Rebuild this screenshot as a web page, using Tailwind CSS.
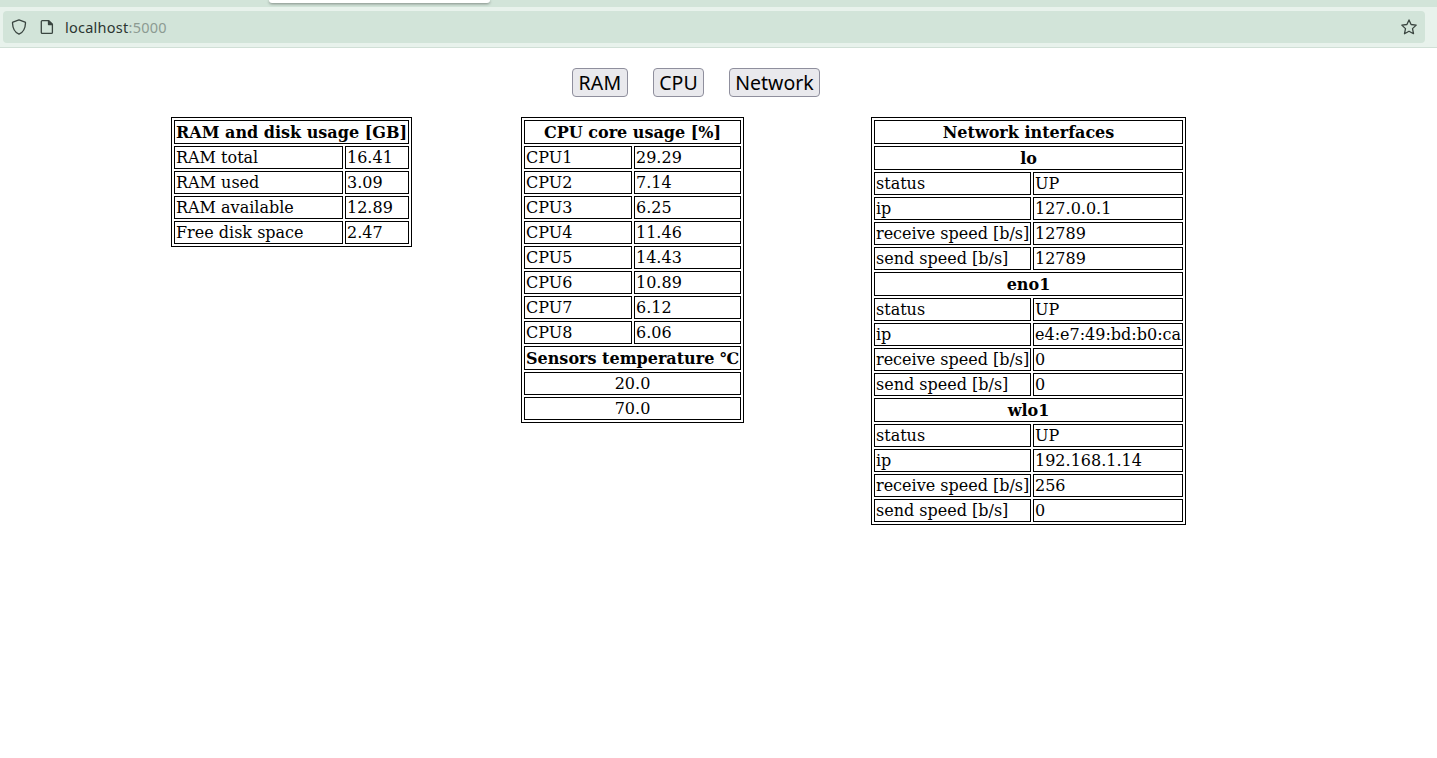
<!DOCTYPE html>
<html lang="en">
<head>
<meta charset="utf-8">
<title>localhost:5000</title>
<script src="https://cdn.jsdelivr.net/npm/@tailwindcss/browser@4"></script>
</head>
<body class="h-screen overflow-hidden bg-white text-black">
<header class="font-['Noto_Sans',sans-serif]">
  <div class="h-[7px] overflow-hidden bg-[#d2e4d9]">
    <div class="ml-[269px] h-[3px] w-[221px] rounded-b-[4px] bg-white shadow-[0_1px_3px_rgba(0,0,0,0.4)]"></div>
  </div>
  <div class="h-[41px] border-b border-[#d0dfd6] bg-[#e8f2ec] pt-1 pl-[3px]">
    <div class="flex h-8 w-[1422px] items-center rounded bg-[#d2e4d9] pl-2 pr-2 text-[#3a4540]">
      <svg class="size-4" viewBox="0 0 16 16" fill="none" stroke="currentColor" stroke-width="1.3" stroke-linejoin="round"><path d="M8 .9 14.1 3.2Q14.6 3.4 14.5 4C14.3 9.4 12.6 13.3 8 15.2 3.4 13.3 1.7 9.4 1.5 4Q1.4 3.4 1.9 3.2Z"/></svg>
      <svg class="ml-3 size-4" viewBox="0 0 16 16" fill="none" stroke="currentColor" stroke-width="1.3" stroke-linejoin="round"><path d="M3.3 1.6H9.7L13.4 5.3V13.4Q13.4 14.4 12.4 14.4H3.3Q2.3 14.4 2.3 13.4V2.6Q2.3 1.6 3.3 1.6Z"/><path d="M9.5 1.8V5.5H13.2Z" fill="currentColor"/></svg>
      <div class="ml-[10px] w-[120px] text-[14.5px] leading-5 tracking-[0.25px] whitespace-nowrap text-[#2c3631]">localhost<span class="text-[#8c9b92]">:5000</span></div>
      <svg class="ml-auto size-4" viewBox="0 0 16 16" fill="none" stroke="currentColor" stroke-width="1.3" stroke-linejoin="round"><path d="M8 .9 10.1 5.5 15.2 6.1 11.5 9.6 12.5 14.7 8 12.2 3.5 14.7 4.5 9.6 .8 6.1 5.9 5.5Z"/></svg>
    </div>
  </div>
</header>
<main>
  <nav class="ml-[572px] flex gap-[25px] pt-5 font-['Noto_Sans',sans-serif] text-[19.5px] leading-[28px]">
    <button class="flex h-[29px] w-[56px] justify-center rounded-[4px] border border-[#8f8f9d] bg-[#e9e9ed] tracking-[0.3px]">RAM</button>
    <button class="flex h-[29px] w-[51px] justify-center rounded-[4px] border border-[#8f8f9d] bg-[#e9e9ed]">CPU</button>
    <button class="flex h-[29px] w-[91px] justify-center rounded-[4px] border border-[#8f8f9d] bg-[#e9e9ed]">Network</button>
  </nav>
  <div class="ml-[171px] flex items-start pt-5 font-['DejaVu_Serif',serif] text-[16px] leading-[19px]">
    <div class="w-[350px]">
      <table class="w-[241px] table-fixed border-separate border-spacing-[2px] border border-black whitespace-nowrap [&_td]:h-[23px] [&_td]:border [&_td]:border-black [&_td]:p-px [&_th]:h-6 [&_th]:border [&_th]:border-black [&_th]:p-px">
        <colgroup><col class="w-[169px]"><col class="w-[64px]"></colgroup>
        <tr><th colspan="2">RAM and disk usage [GB]</th></tr>
        <tr><td>RAM total</td><td>16.41</td></tr>
        <tr><td>RAM used</td><td>3.09</td></tr>
        <tr><td>RAM available</td><td>12.89</td></tr>
        <tr><td>Free disk space</td><td>2.47</td></tr>
      </table>
    </div>
    <div class="w-[350px]">
      <table class="w-[223px] table-fixed border-separate border-spacing-[2px] border border-black whitespace-nowrap [&_td]:h-[23px] [&_td]:border [&_td]:border-black [&_td]:p-px [&_th]:h-6 [&_th]:border [&_th]:border-black [&_th]:p-px">
        <colgroup><col class="w-[108px]"><col class="w-[107px]"></colgroup>
        <tr><th colspan="2">CPU core usage [%]</th></tr>
        <tr><td>CPU1</td><td>29.29</td></tr>
        <tr><td>CPU2</td><td>7.14</td></tr>
        <tr><td>CPU3</td><td>6.25</td></tr>
        <tr><td>CPU4</td><td>11.46</td></tr>
        <tr><td>CPU5</td><td>14.43</td></tr>
        <tr><td>CPU6</td><td>10.89</td></tr>
        <tr><td>CPU7</td><td>6.12</td></tr>
        <tr><td>CPU8</td><td>6.06</td></tr>
        <tr><th colspan="2">Sensors temperature ℃</th></tr>
        <tr><td colspan="2" class="text-center">20.0</td></tr>
        <tr><td colspan="2" class="text-center">70.0</td></tr>
      </table>
    </div>
    <table class="w-[315px] table-fixed border-separate border-spacing-[2px] border border-black whitespace-nowrap [&_td]:h-[23px] [&_td]:border [&_td]:border-black [&_td]:p-px [&_th]:h-6 [&_th]:border [&_th]:border-black [&_th]:p-px">
      <colgroup><col class="w-[157px]"><col class="w-[150px]"></colgroup>
      <tr><th colspan="2">Network interfaces</th></tr>
      <tr><th colspan="2">lo</th></tr>
      <tr><td>status</td><td>UP</td></tr>
      <tr><td>ip</td><td>127.0.0.1</td></tr>
      <tr><td>receive speed [b/s]</td><td>12789</td></tr>
      <tr><td>send speed [b/s]</td><td>12789</td></tr>
      <tr><th colspan="2">eno1</th></tr>
      <tr><td>status</td><td>UP</td></tr>
      <tr><td>ip</td><td>e4:e7:49:bd:b0:ca</td></tr>
      <tr><td>receive speed [b/s]</td><td>0</td></tr>
      <tr><td>send speed [b/s]</td><td>0</td></tr>
      <tr><th colspan="2">wlo1</th></tr>
      <tr><td>status</td><td>UP</td></tr>
      <tr><td>ip</td><td>192.168.1.14</td></tr>
      <tr><td>receive speed [b/s]</td><td>256</td></tr>
      <tr><td>send speed [b/s]</td><td>0</td></tr>
    </table>
  </div>
</main>
</body>
</html>
